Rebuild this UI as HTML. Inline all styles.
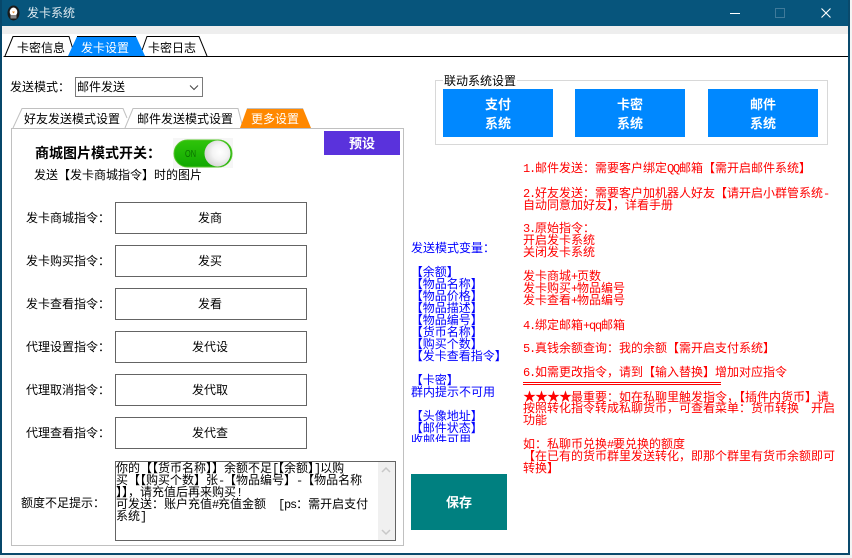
<!DOCTYPE html>
<html><head><meta charset="utf-8">
<style>
html,body{margin:0;padding:0;background:#fff;}
#w{position:relative;width:852px;height:558px;overflow:hidden;background:#fff;font:12px/12px "WenQuanYi Zen Hei","Noto Sans CJK SC",sans-serif;color:#000;}
#w div{position:absolute;box-sizing:border-box;}
.t{white-space:nowrap;height:12px;line-height:12px;}
.r{color:#f00;left:523px;}
.b{color:#00f;left:411px;}
.bb{color:#00f;left:408px;}
.l{left:26px;}
.i{left:115px;width:192px;height:32px;border:1px solid #646464;text-align:center;line-height:30px;background:#fff;padding-right:2px;}
.btn{background:#0088ff;color:#fff;font-weight:bold;font-size:13px;text-align:center;width:110px;height:48px;top:89px;line-height:19px;padding-top:5px;}
svg{position:absolute;left:0;top:0;}
i{font:12px/12px "Liberation Mono",monospace;letter-spacing:-1.2px;}
b{display:inline-block;width:12px;text-align:center;font:13px/12px "Noto Sans CJK SC",sans-serif;}
</style></head><body>
<div id="w">
<div style="left:0;top:0;width:852px;height:26px;background:#07557c;"></div>
<div style="left:0;top:26px;width:849px;height:8px;background:#eeeeee;"></div>
<div style="left:0;top:0;width:2px;height:556px;background:#07476a;"></div>
<div style="left:848px;top:0;width:2px;height:555px;background:#0a4a6c;"></div>
<div style="left:0;top:553px;width:850px;height:2px;background:#0a4a6c;"></div>
<div style="left:850px;top:0;width:2px;height:558px;background:#f4f4f4;"></div>
<div style="left:0;top:555px;width:852px;height:3px;background:#f0f0f0;"></div>

<svg width="852" height="558">
<!-- penguin -->
<ellipse cx="13.500" cy="13" rx="6" ry="7.500" fill="#1a1a1a"/>
<ellipse cx="13.500" cy="12" rx="3.800" ry="4.500" fill="#fff"/>
<path d="M10.500 15h6v3.500h-6z" fill="#888"/>
<path d="M12 11.500h3l-1.500 2z" fill="#e08a30"/>
<!-- window controls -->
<rect x="730" y="13" width="10" height="1" fill="#fff"/>
<rect x="775.500" y="8.500" width="9" height="9" fill="none" stroke="#3f7a9a"/>
<path d="M821.500 8.500l9 9M830.500 8.500l-9 9" stroke="#fff" stroke-width="1.100" fill="none"/>
<!-- main tabs -->
<path d="M3.500 56.500H848" stroke="#000" fill="none"/>
<path d="M5 56L13 36.500H69L75 56" fill="#fff" stroke="#000"/>
<path d="M140 56L147 36.500H199L207 56" fill="#fff" stroke="#000"/>
<path d="M68 56L77 36.500H136L145 56Z" fill="#0088ff"/>
<path d="M77 36.500H136" stroke="#000"/>
<!-- sub tabs -->
<path d="M13 128L22 108.500H123L127 118" fill="#fff" stroke="#c0c0c0"/>
<path d="M125 128L133 108.500H238L243 128" fill="#fff" stroke="#c0c0c0"/>
<path d="M240 128L247 108.500H303L311 128Z" fill="#ff8800"/>
<path d="M247 108.500H303" stroke="#c0c0c0"/>
<!-- red rule -->
<rect x="523" y="382" width="198" height="1" fill="#f00"/>
<rect x="523" y="384" width="198" height="1" fill="#f00"/>
</svg>

<div class="t" style="left:27px;top:7px;color:#dfeaf0;">发卡系统</div>
<div class="t" style="left:17px;top:42px;">卡密信息</div>
<div class="t" style="left:81px;top:42px;color:#fff;">发卡设置</div>
<div class="t" style="left:148px;top:42px;">卡密日志</div>

<div class="t" style="left:10px;top:81px;">发送模式：</div>
<div style="left:75px;top:77px;width:128px;height:20px;border:1px solid #7a7a7a;background:#fff;"></div>
<div class="t" style="left:77px;top:81px;">邮件发送</div>
<svg width="852" height="558"><path d="M190 85.500l4 4 4-4" fill="none" stroke="#444"/></svg>

<div class="t" style="left:24px;top:113px;">好友发送模式设置</div>
<div class="t" style="left:137px;top:113px;">邮件发送模式设置</div>
<div class="t" style="left:251px;top:113px;color:#fff;">更多设置</div>

<div style="left:11px;top:128px;width:393px;height:418px;border:1px solid #c0c0c0;"></div>
<div style="left:324px;top:131px;width:76px;height:24px;background:#5a32dc;color:#fff;font-weight:bold;font-size:13px;text-align:center;line-height:24px;">预设</div>

<div class="t" style="left:35px;top:146px;font-size:14px;font-weight:bold;height:14px;line-height:14px;">商城图片模式开关：</div>
<div style="left:173px;top:138px;width:60px;height:30px;background:#f6f6f6;"></div>
<svg width="852" height="558">
<defs><linearGradient id="g" x1="0" y1="0" x2="0" y2="1"><stop offset="0" stop-color="#2fc40a"/><stop offset="1" stop-color="#10a800"/></linearGradient>
<radialGradient id="k" cx=".6" cy=".45" r=".6"><stop offset="0" stop-color="#fff"/><stop offset=".5" stop-color="#f4f4f4"/><stop offset="1" stop-color="#d4d4d4"/></radialGradient></defs>
<rect x="174" y="140" width="58" height="27" rx="13.500" fill="url(#g)" stroke="#55c52a"/>
<circle cx="217.500" cy="153.500" r="13" fill="url(#k)"/>
<text x="185" y="157" font-family="Liberation Sans" font-size="10" textLength="11" lengthAdjust="spacingAndGlyphs" fill="#0a7000">ON</text>
</svg>
<div class="t" style="left:34px;top:169px;">发送【发卡商城指令】时的图片</div>

<div class="t l" style="top:212px;">发卡商城指令：</div><div class="i" style="top:202px;">发商</div>
<div class="t l" style="top:255px;">发卡购买指令：</div><div class="i" style="top:245px;">发买</div>
<div class="t l" style="top:298px;">发卡查看指令：</div><div class="i" style="top:288px;">发看</div>
<div class="t l" style="top:341px;">代理设置指令：</div><div class="i" style="top:331px;">发代设</div>
<div class="t l" style="top:384px;">代理取消指令：</div><div class="i" style="top:374px;">发代取</div>
<div class="t l" style="top:427px;">代理查看指令：</div><div class="i" style="top:417px;">发代查</div>
<div class="t" style="left:21px;top:497px;">额度不足提示：</div>

<div style="left:115px;top:461px;width:281px;height:80px;border:1px solid #646464;background:#fff;"></div>
<div style="left:378px;top:462px;width:17px;height:78px;background:#f0f0f0;"></div>
<svg width="852" height="558"><path d="M382 472l4-4 4 4M382 530l4 4 4-4" fill="none" stroke="#c8c8c8" stroke-width="1.500"/></svg>
<div class="t" style="left:116px;top:462px;">你的【【货币名称】】余额不足<i>[</i>【余额】<i>]</i>以购</div>
<div class="t" style="left:116px;top:474px;">买【【购买个数】张<i>-</i>【物品编号】<i>-</i>【物品名称</div>
<div class="t" style="left:116px;top:486px;">】】，请充值后再来购买<i>!</i></div>
<div class="t" style="left:116px;top:498px;">可发送：账户充值<i>#</i>充值金额<i>&nbsp;&nbsp;[ps</i>：需开启支付</div>
<div class="t" style="left:116px;top:510px;">系统<i>]</i></div>

<div style="left:435px;top:80px;width:393px;height:65px;border:1px solid #d8d8d8;"></div>
<div class="t" style="left:443px;top:75px;background:#fff;padding:0 1px;">联动系统设置</div>
<div class="btn" style="left:443px;">支付<br>系统</div>
<div class="btn" style="left:575px;">卡密<br>系统</div>
<div class="btn" style="left:708px;">邮件<br>系统</div>

<div class="t r" style="top:162px;"><i>1.</i>邮件发送：需要客户绑定<i>QQ</i>邮箱【需开启邮件系统】</div>
<div class="t r" style="top:187px;"><i>2.</i>好友发送：需要客户加机器人好友【请开启小群管系统<i>-</i></div>
<div class="t r" style="top:199px;">自动同意加好友】，详看手册</div>
<div class="t r" style="top:222px;"><i>3.</i>原始指令：</div>
<div class="t r" style="top:234px;">开启发卡系统</div>
<div class="t r" style="top:246px;">关闭发卡系统</div>
<div class="t r" style="top:270px;">发卡商城<i>+</i>页数</div>
<div class="t r" style="top:282px;">发卡购买<i>+</i>物品编号</div>
<div class="t r" style="top:294px;">发卡查看<i>+</i>物品编号</div>
<div class="t r" style="top:319px;"><i>4.</i>绑定邮箱<i>+qq</i>邮箱</div>
<div class="t r" style="top:342px;"><i>5.</i>真钱余额查询：我的余额【需开启支付系统】</div>
<div class="t r" style="top:366px;"><i>6.</i>如需更改指令，请到【输入替换】增加对应指令</div>
<div class="t r" style="top:390px;"><b>★</b><b>★</b><b>★</b><b>★</b>最重要：如在私聊里触发指令，【插件内货币】请</div>
<div class="t r" style="top:402px;">按照转化指令转成私聊货币，可查看菜单：货币转换<i>&nbsp;&nbsp;</i>开启</div>
<div class="t r" style="top:414px;">功能</div>
<div class="t r" style="top:438px;">如：私聊币兑换<i>#</i>要兑换的额度</div>
<div class="t r" style="top:450px;">【在已有的货币群里发送转化，即那个群里有货币余额即可</div>
<div class="t r" style="top:462px;">转换】</div>

<div class="t b" style="top:242px;">发送模式变量：</div>
<div class="t bb" style="top:266px;">&nbsp;【余额】</div>
<div class="t bb" style="top:278px;">&nbsp;【物品名称】</div>
<div class="t bb" style="top:290px;">&nbsp;【物品价格】</div>
<div class="t bb" style="top:302px;">&nbsp;【物品描述】</div>
<div class="t bb" style="top:314px;">&nbsp;【物品编号】</div>
<div class="t bb" style="top:326px;">&nbsp;【货币名称】</div>
<div class="t bb" style="top:338px;">&nbsp;【购买个数】</div>
<div class="t bb" style="top:350px;">&nbsp;【发卡查看指令】</div>
<div class="t bb" style="top:374px;">&nbsp;【卡密】</div>
<div class="t b" style="top:386px;">群内提示不可用</div>
<div class="t bb" style="top:410px;">&nbsp;【头像地址】</div>
<div class="t bb" style="top:422px;">&nbsp;【邮件状态】</div>
<div class="t b" style="top:434px;height:8px;overflow:hidden;">收邮件可用</div>

<div style="left:411px;top:474px;width:96px;height:56px;background:#008080;color:#fff;font-weight:bold;font-size:13px;text-align:center;line-height:56px;">保存</div>
</div>
</body></html>
